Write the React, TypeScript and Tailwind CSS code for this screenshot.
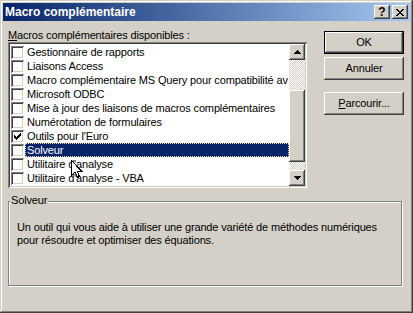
import React from "react";

const raised =
  "shadow-[inset_-1px_-1px_#404040,inset_1px_1px_#ffffff,inset_-2px_-2px_#808080,inset_2px_2px_#d4d0c8]";

const items: { label: string; checked?: boolean; selected?: boolean }[] = [
  { label: "Gestionnaire de rapports" },
  { label: "Liaisons Access" },
  { label: "Macro complémentaire MS Query pour compatibilité avec les versions précédentes" },
  { label: "Microsoft ODBC" },
  { label: "Mise à jour des liaisons de macros complémentaires" },
  { label: "Numérotation de formulaires" },
  { label: "Outils pour l'Euro", checked: true },
  { label: "Solveur", selected: true },
  { label: "Utilitaire d'analyse" },
  { label: "Utilitaire d'analyse - VBA" },
];

function Check() {
  const cols: [number, number][] = [
    [3, 5],
    [4, 6],
    [5, 7],
    [6, 6],
    [7, 5],
    [8, 4],
    [9, 3],
  ];
  return (
    <svg width="13" height="13" viewBox="0 0 13 13" shapeRendering="crispEdges" className="absolute left-0 top-0">
      {cols.map(([x, y]) => (
        <rect key={x} x={x} y={y} width="1" height="3" fill="#000" />
      ))}
    </svg>
  );
}

function CheckBox({ checked }: { checked?: boolean }) {
  return (
    <div className="relative w-[13px] h-[13px] shrink-0 bg-white shadow-[inset_1px_1px_#808080,inset_-1px_-1px_#ffffff,inset_2px_2px_#404040,inset_-2px_-2px_#d4d0c8]">
      {checked && <Check />}
    </div>
  );
}

function Arrow({ up }: { up?: boolean }) {
  return (
    <svg width="7" height="4" viewBox="0 0 7 4" shapeRendering="crispEdges">
      {up ? (
        <>
          <rect x="3" y="0" width="1" height="1" fill="#000" />
          <rect x="2" y="1" width="3" height="1" fill="#000" />
          <rect x="1" y="2" width="5" height="1" fill="#000" />
          <rect x="0" y="3" width="7" height="1" fill="#000" />
        </>
      ) : (
        <>
          <rect x="0" y="0" width="7" height="1" fill="#000" />
          <rect x="1" y="1" width="5" height="1" fill="#000" />
          <rect x="2" y="2" width="3" height="1" fill="#000" />
          <rect x="3" y="3" width="1" height="1" fill="#000" />
        </>
      )}
    </svg>
  );
}

function Cursor() {
  return (
    <svg
      width="13"
      height="20"
      viewBox="0 0 13 20"
      shapeRendering="crispEdges"
      className="absolute left-[71px] top-[160px]"
    >
      <path
        d="M0.5 0.5 L0.5 15.5 L4 12 L6.5 17.5 L8.5 16.5 L6 11 L10.5 11 Z"
        fill="#fff"
        stroke="#000"
        strokeWidth="1"
      />
    </svg>
  );
}

export default function App() {
  return (
    <div className="relative w-[413px] h-[313px] bg-[#d4d0c8] p-[3px] flex flex-col font-['Liberation_Sans',Arial,sans-serif] text-[11px] tracking-[-0.15px] text-black shadow-[inset_-1px_-1px_#404040,inset_1px_1px_#d4d0c8,inset_-2px_-2px_#808080,inset_2px_2px_#ffffff]">
      {/* Title bar */}
      <div className="h-[18px] flex items-center bg-linear-to-r from-[#0a246a] to-[#a6caf0] pl-[2px] pr-[2px]">
        <span className="flex-1 text-white font-bold text-[12px] tracking-normal leading-[18px]">
          Macro complémentaire
        </span>
        <div className={`w-[16px] h-[14px] bg-[#d4d0c8] ${raised} flex items-center justify-center text-[12px] font-bold leading-[14px] tracking-normal`}>
          ?
        </div>
        <div className={`ml-[2px] w-[16px] h-[14px] bg-[#d4d0c8] ${raised} flex items-center justify-center`}>
          <svg width="8" height="7" viewBox="0 0 8 7" shapeRendering="crispEdges">
            <path d="M0 0h2v1h-2zM6 0h2v1h-2zM1 1h2v1h-2zM5 1h2v1h-2zM2 2h4v1h-4zM3 3h2v1h-2zM2 4h4v1h-4zM1 5h2v1h-2zM5 5h2v1h-2zM0 6h2v1h-2zM6 6h2v1h-2z" fill="#000" />
          </svg>
        </div>
      </div>

      {/* Main content */}
      <div className="flex pl-[5px] pt-[8px]">
        <div className="w-[299px] flex flex-col">
          <div className="h-[13px] leading-[13px]">
            <u>M</u>acros complémentaires disponibles :
          </div>
          <div className="h-[146px] p-[2px] flex bg-white shadow-[inset_1px_1px_#808080,inset_-1px_-1px_#ffffff,inset_2px_2px_#404040,inset_-2px_-2px_#d4d0c8]">
            <div className="flex-1 min-w-0 pt-[1px] overflow-hidden bg-white">
              {items.map((it) => (
                <div key={it.label} className="h-[14px] flex items-start pl-[1px]">
                  <div className="pt-[1px]">
                    <CheckBox checked={it.checked} />
                  </div>
                  <div
                    className={`ml-[1px] flex-1 min-w-0 h-[14px] leading-[13px] whitespace-nowrap overflow-hidden pl-[1px] ${
                      it.selected
                        ? "bg-[#0a246a] text-white border border-dotted border-[#f5d99a]"
                        : "border border-transparent"
                    }`}
                  >
                    {it.label}
                  </div>
                </div>
              ))}
            </div>
            {/* Scrollbar */}
            <div className="w-[16px] flex flex-col bg-[image:repeating-conic-gradient(#ffffff_0_25%,#d4d0c8_0_50%)] bg-[length:2px_2px]">
              <div className={`h-[16px] bg-[#d4d0c8] ${raised} flex items-center justify-center`}>
                <Arrow up />
              </div>
              <div className="h-[30px]" />
              <div className={`h-[72px] bg-[#d4d0c8] ${raised}`} />
              <div className="flex-1" />
              <div className={`h-[16px] bg-[#d4d0c8] ${raised} flex items-center justify-center`}>
                <Arrow />
              </div>
            </div>
          </div>
        </div>

        {/* Buttons */}
        <div className="ml-[17px] mt-[2px] flex flex-col">
          <div className="w-[80px] h-[23px] border border-black">
            <div className={`w-full h-full bg-[#d4d0c8] ${raised} flex items-center justify-center`}>OK</div>
          </div>
          <div className={`mt-[3px] w-[80px] h-[23px] bg-[#d4d0c8] ${raised} flex items-center justify-center`}>
            Annuler
          </div>
          <div className={`mt-[12px] w-[80px] h-[23px] bg-[#d4d0c8] ${raised} flex items-center justify-center`}>
            <span>
              <u>P</u>arcourir...
            </span>
          </div>
        </div>
      </div>

      {/* Group box */}
      <div className="relative ml-[5px] mt-[13px] w-[394px] h-[85px] border border-[#808080] shadow-[inset_1px_1px_#ffffff,1px_1px_#ffffff]">
        <span className="absolute left-[1px] top-[-8px] px-[1px] bg-[#d4d0c8] leading-[13px]">Solveur</span>
        <div className="pl-[8px] pt-[19px] leading-[13px]">
          Un outil qui vous aide à utiliser une grande variété de méthodes numériques
          <br />
          pour résoudre et optimiser des équations.
        </div>
      </div>

      <Cursor />
    </div>
  );
}
